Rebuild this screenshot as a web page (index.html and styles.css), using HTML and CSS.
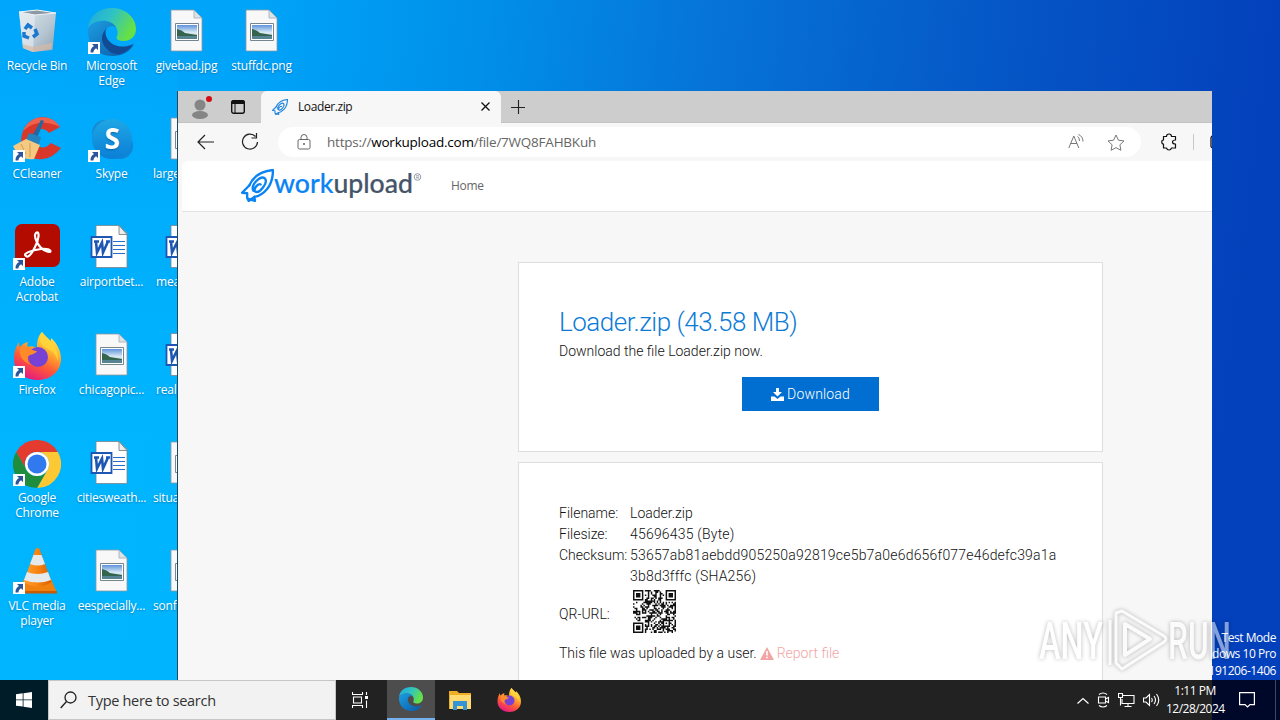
FILE: index.html
```html
<!DOCTYPE html>
<html lang="en">
<head>
    <meta charset="UTF-8">
    <meta name="viewport" content="width=device-width, initial-scale=1.0">
    <title>Loader.zip</title>
    <link rel="stylesheet" href="styles.css">
</head>
<body>

<!-- Shared icons -->
<svg class="defs" width="0" height="0">
    <defs>
        <linearGradient id="edgeBlue" x1="0" y1="0" x2="1" y2="1"><stop offset="0" stop-color="#1b9de2"/><stop offset="1" stop-color="#0c59a4"/></linearGradient>
        <linearGradient id="edgeGreen" x1="0" y1="0" x2="1" y2="0.4"><stop offset="0" stop-color="#1ca8e0"/><stop offset="0.5" stop-color="#2fc2c5"/><stop offset="1" stop-color="#66e047"/></linearGradient>
        <linearGradient id="binSide" x1="0" y1="0" x2="1" y2="1"><stop offset="0" stop-color="#dfe8ee"/><stop offset="0.6" stop-color="#b6c6d2"/><stop offset="1" stop-color="#8fa3b3"/></linearGradient>
        <linearGradient id="fox" x1="0.8" y1="0" x2="0.3" y2="1"><stop offset="0" stop-color="#fff44f"/><stop offset="0.35" stop-color="#ffb02e"/><stop offset="0.65" stop-color="#ff5a36"/><stop offset="1" stop-color="#e31587"/></linearGradient>
        <linearGradient id="skype" x1="0" y1="0" x2="0" y2="1"><stop offset="0" stop-color="#1fa7e6"/><stop offset="1" stop-color="#0a7fd6"/></linearGradient>
        <linearGradient id="photo" x1="0" y1="0" x2="0" y2="1"><stop offset="0" stop-color="#5e93dc"/><stop offset="0.55" stop-color="#dcecf5"/><stop offset="1" stop-color="#8fb6cf"/></linearGradient>
        <linearGradient id="cone" x1="0" y1="0" x2="1" y2="0"><stop offset="0" stop-color="#ffa030"/><stop offset="0.5" stop-color="#f98410"/><stop offset="1" stop-color="#d95e00"/></linearGradient>
    </defs>

    <symbol id="shortcut" viewBox="0 0 12 12">
        <path d="M0 0h12v12H0z" fill="#fff"/>
        <path d="M4 2h6v6L8 6.300Q5.500 7.500 5.300 10.500H2.600Q2 6.500 6 4z" fill="#2b579a"/>
    </symbol>

    <symbol id="bin" viewBox="0 0 48 48">
        <path d="M6 4 24 2l19 3-3.500 37L20 44l-10-4z" fill="url(#binSide)"/>
        <path d="M6 4 22 7 43 5 24 2z" fill="#8b9aa5" stroke="#eef4f8"/>
        <path d="M22 7 20 44 10 40 6 4z" fill="#e9eff3" opacity=".6"/>
        <path d="m10 36 10 3 19-4-.500 6L20 44l-10-4z" fill="#d9b9a4" opacity=".7"/>
        <path d="m12 21 3-4 4 3M22 21l2 5-4 3M16 30l-5-2v-4" fill="none" stroke="#1a78cf" stroke-width="3.500"/>
    </symbol>

    <symbol id="edge" viewBox="0 0 48 48">
        <path d="M0 21C1 8 11 0 24 0c14 0 24 10 24 21 0 8-6 12-12 12-5 0-9-2-7-5 2-4 0-13-11-15C9 12 2 16 0 21z" fill="url(#edgeGreen)"/>
        <path d="M0 21c2-5 9-9 18-8 5 1 8 3 10 6-7-3-12 2-10 9 2 9 15 15 28 8C42 44 34 48 24 48 9 48-1 36 0 21z" fill="url(#edgeBlue)"/>
        <path d="M19 20c-6 5-7 14-1 20 4 5 10 7 14 6 6-2 10-5 13-10-12 6-24 1-27-8-1-4-1-6 1-8z" fill="#124a93"/>
    </symbol>

    <symbol id="edgeSmall" viewBox="0 0 48 48">
        <path d="M0 21C1 8 11 0 24 0c14 0 24 10 24 21 0 8-6 12-12 12-5 0-9-2-7-5 2-4 0-13-11-15C9 12 2 16 0 21z" fill="url(#edgeGreen)"/>
        <path d="M0 21c2-5 9-9 18-8 5 1 8 3 10 6-7-3-12 2-10 9 2 9 15 15 28 8C42 44 34 48 24 48 9 48-1 36 0 21z" fill="url(#edgeBlue)"/>
    </symbol>

    <symbol id="picture" viewBox="0 0 48 48">
        <path d="M8 2h23l8 8v33H8z" fill="#f8f8f8" stroke="#8e989e" stroke-width=".8"/>
        <path d="M31 2v8h8z" fill="#d9e4ea" stroke="#9ba5aa" stroke-width=".7"/>
        <path d="M12.500 15.500h23v17h-23z" fill="#fff" stroke="#778591"/>
        <path d="M14 17h20v14H14z" fill="url(#photo)"/>
        <path d="M14 21q5 1 8 4l12 2v1H14z" fill="#34634e"/>
        <path d="M14 28h20v3H14z" fill="#568493"/>
    </symbol>

    <symbol id="word" viewBox="0 0 48 48">
        <path d="M8 1.500h23l8 8v34H8z" fill="#fff" stroke="#7a858c" stroke-width=".8"/>
        <path d="M31 1.500v9h8z" fill="#eee" stroke="#6d767c" stroke-width=".8"/>
        <path d="M25 17.500h12M25 21.500h12M25 25.500h12M25 29.500h12" stroke="#2b6cc4"/>
        <path d="M3.500 13h20v20h-20z" fill="#fff" stroke="#1e56b4" stroke-width="1.800"/>
        <path d="M6 17.500h5M8 17.500l1 11 5-10 1 10 5-11M18 17.500h4" fill="none" stroke="#1e56b4" stroke-width="2.600"/>
    </symbol>

    <symbol id="ccleaner" viewBox="0 0 48 48">
        <path d="M47 11C38-3 17-2 10 15 3 34 17 45 30 43q10-1 18-11l-10-5q-9 9-15 0c-6-11 6-19 13-10z" fill="#d8372a"/>
        <path d="M47 11C38-3 17-2 10 15q15-14 37-4z" fill="#f0614d"/>
        <path d="m28 4 3 1-7 17-5-2z" fill="#27679f"/>
        <path d="m16 17 12 4-2 8-13-5z" fill="#2583bd"/>
        <path d="M13 23 0 30q7 15 21 13l6-14z" fill="#f4ca83"/>
        <path d="m8 28 5 10M17 27v14" stroke="#d69a4a"/>
    </symbol>

    <symbol id="skypeIcon" viewBox="0 0 48 48">
        <circle cx="17" cy="17" r="13" fill="#168ad0"/>
        <circle cx="32" cy="30" r="13" fill="#1085d7"/>
        <circle cx="24" cy="23" r="20" fill="url(#skype)"/>
        <text x="24" y="33" text-anchor="middle" class="skype-letter">S</text>
    </symbol>

    <symbol id="acrobat" viewBox="0 0 48 48">
        <rect x="2" y="0" width="45" height="43" rx="7" fill="#b30b00"/>
        <path d="M13 32C9 30 18 26 28 25c11-1 12 5 5 2C25 24 20 12 23 9c4-3 3 7-1 14-4 8-7 11-9 9z" fill="none" stroke="#fff" stroke-width="2.200"/>
    </symbol>

    <symbol id="firefox" viewBox="0 0 48 48">
        <path d="M29 0c2 3 4 5 9 9V6c7 6 10 14 10 21 0 12-10 21-23 21C11 48 1 39 1 27 1 19 3 15 6 10c0 3 0 4 1 5q3-4 8-5c-1 2-1 4 0 5 2-1 5-1 9 1 0-7 1-12 5-16z" fill="url(#fox)"/>
        <circle cx="25" cy="25" r="10" fill="#7542d5"/>
        <path d="M7 16c5-4 10 3 17 3-2 4-8 3-9 6-1 4 1 7 5 8-8-1-15-8-13-17z" fill="#ff8a2a"/>
        <path d="M29 0c8 9 17 15 16 29-3-11-9-10-16-16-3-4-2-10 0-13z" fill="#ffd43c" opacity=".9"/>
    </symbol>

    <symbol id="chrome" viewBox="0 0 48 48">
        <path d="M3.200 12a24 24 0 0 1 41.600 0H24a12 12 0 0 0-10.400 18z" fill="#e33b2e"/>
        <path d="M44.800 12A24 24 0 0 1 24 48l10.400-18A12 12 0 0 0 24 12z" fill="#fcc934"/>
        <path d="M24 48A24 24 0 0 1 3.200 12l10.400 18A12 12 0 0 0 34.400 30z" fill="#1e8e3e"/>
        <circle cx="24" cy="24" r="12" fill="#fff"/>
        <circle cx="24" cy="24" r="9.500" fill="#3079ee"/>
    </symbol>

    <symbol id="vlc" viewBox="0 0 48 48">
        <path d="M11 31h27l6 14H5z" fill="#f0810f"/>
        <path d="M5 43h39v2.500H5z" fill="#ca5b00"/>
        <path d="M22.500 1q2-2 4 0l12 33q-14 9-28 0z" fill="url(#cone)"/>
        <path d="M20.500 7h8l3.500 9q-7 3-15 0zM14 24q10 4 21 0l3 8q-13 5-27 0z" fill="#e5e9eb"/>
    </symbol>

    <symbol id="rocket" viewBox="0 0 32 32">
        <g fill="none" stroke="currentColor" stroke-width="2.300" stroke-linejoin="round" stroke-linecap="round">
            <path d="M8 16C12 7 20 2 31 1c0 11-4 20-14 25l-4 1 .500 4-6-2"/>
            <path d="M8 16 1 23l5 .500V28l1.500 3L13 27"/>
            <path d="M12 21c-3-6 7-15 11-12 4 4-5 15-9 13-3-2 3-9 5-7"/>
        </g>
    </symbol>
</svg>

<div class="screen">

    <!-- Desktop icons, one list per column -->
    <div class="desktop">
        <div class="column">
            <div class="shortcut"><svg class="icon"><use href="#bin"/></svg><span>Recycle Bin</span></div>
            <div class="shortcut"><svg class="icon"><use href="#ccleaner"/></svg><svg class="arrow"><use href="#shortcut"/></svg><span>CCleaner</span></div>
            <div class="shortcut"><svg class="icon"><use href="#acrobat"/></svg><svg class="arrow"><use href="#shortcut"/></svg><span>Adobe Acrobat</span></div>
            <div class="shortcut"><svg class="icon"><use href="#firefox"/></svg><svg class="arrow"><use href="#shortcut"/></svg><span>Firefox</span></div>
            <div class="shortcut"><svg class="icon"><use href="#chrome"/></svg><svg class="arrow"><use href="#shortcut"/></svg><span>Google Chrome</span></div>
            <div class="shortcut"><svg class="icon"><use href="#vlc"/></svg><svg class="arrow"><use href="#shortcut"/></svg><span>VLC media player</span></div>
        </div>
        <div class="column">
            <div class="shortcut"><svg class="icon"><use href="#edge"/></svg><svg class="arrow"><use href="#shortcut"/></svg><span>Microsoft Edge</span></div>
            <div class="shortcut"><svg class="icon"><use href="#skypeIcon"/></svg><svg class="arrow"><use href="#shortcut"/></svg><span>Skype</span></div>
            <div class="shortcut"><svg class="icon"><use href="#word"/></svg><span>airportbet...</span></div>
            <div class="shortcut"><svg class="icon"><use href="#picture"/></svg><span>chicagopic...</span></div>
            <div class="shortcut"><svg class="icon"><use href="#word"/></svg><span>citiesweath...</span></div>
            <div class="shortcut"><svg class="icon"><use href="#picture"/></svg><span>eespecially...</span></div>
        </div>
        <div class="column">
            <div class="shortcut"><svg class="icon"><use href="#picture"/></svg><span>givebad.jpg</span></div>
            <div class="shortcut"><svg class="icon"><use href="#picture"/></svg><span class="cut">large</span></div>
            <div class="shortcut"><svg class="icon"><use href="#word"/></svg><span class="cut short">mea</span></div>
            <div class="shortcut"><svg class="icon"><use href="#word"/></svg><span class="cut short">realp</span></div>
            <div class="shortcut"><svg class="icon"><use href="#picture"/></svg><span class="cut">situa</span></div>
            <div class="shortcut"><svg class="icon"><use href="#picture"/></svg><span class="cut">sonfl</span></div>
        </div>
        <div class="column">
            <div class="shortcut"><svg class="icon"><use href="#picture"/></svg><span>stuffdc.png</span></div>
        </div>
    </div>

    <div class="build">
        <div>Test Mode</div>
        <div>dows 10 Pro</div>
        <div>191206-1406</div>
    </div>

    <!-- Browser window -->
    <div class="window">
        <div class="tabs">
            <div class="tab-tools">
                <svg width="24" height="26" viewBox="0 0 24 26"><circle cx="11" cy="11" r="5.500" fill="#858585"/><ellipse cx="11" cy="21" rx="8" ry="4" fill="#858585"/><circle cx="20" cy="5" r="3" fill="#d40c14"/></svg>
                <svg width="16" height="16" viewBox="0 0 16 16"><rect x="1.700" y="1.700" width="12.600" height="12.600" rx="2" fill="none" stroke="#111" stroke-width="1.400"/><path d="M1 4q0-3 3-3h8q3 0 3 3v1H1z" fill="#111"/><path d="M5 5v9" stroke="#111"/></svg>
            </div>
            <div class="tab">
                <svg class="favicon"><use href="#rocket"/></svg>
                <span>Loader.zip</span>
                <svg class="close" width="9" height="9" viewBox="0 0 9 9"><path d="m.5.5 8 8m0-8-8 8" stroke="#111" stroke-width="1.300"/></svg>
            </div>
            <svg class="new-tab" width="14" height="14" viewBox="0 0 14 14"><path d="M0 7.500h14M7.500 0v14" stroke="#222" stroke-width="1.100"/></svg>
        </div>

        <div class="toolbar">
            <svg width="18" height="16" viewBox="0 0 18 16"><path d="M17 8H1.500M8 1 1 8l7 7" fill="none" stroke="#222" stroke-width="1.200"/></svg>
            <svg class="reload" width="18" height="18" viewBox="0 0 18 18"><path d="M14.500 3.500A7.500 7.500 0 1 0 16.500 9M15.500 0v5h-5" fill="none" stroke="#222" stroke-width="1.200"/></svg>
            <div class="address">
                <svg width="14" height="16" viewBox="0 0 14 16"><rect x="1" y="5.500" width="12" height="9.500" rx="1.500" fill="none" stroke="#666"/><path d="M4 5V3.500q0-3 3-3t3 3V5" fill="none" stroke="#666"/><circle cx="7" cy="10" r="1" fill="#666"/></svg>
                <span class="url">https://<b>workupload.com</b>/file/7WQ8FAHBKuh</span>
                <svg width="16" height="16" viewBox="0 0 16 16"><path d="m.8 14 5-12 5 12M2.500 9.500h6.500M9.500 2.500q2 1 2 4.500M10.500.500q4.500 2 4.500 7" fill="none" stroke="#777"/></svg>
                <svg class="star" width="18" height="17" viewBox="0 0 18 17"><path d="m9 1 2.400 5.200 5.600.7-4.100 3.900 1 5.500L9 13.600l-4.900 2.700 1-5.500L1 6.900l5.600-.7z" fill="none" stroke="#777"/></svg>
            </div>
            <svg class="puzzle" width="16" height="18" viewBox="0 0 16 18"><path d="M2.500 3.500h3Q5.500 1 8 1t2.500 2.500h4v3.500q-3 0-3 2t3 2v4h-4Q10 17 8 17t-2.500-2h-3v-4Q.8 11 .8 9t1.700-2z" fill="none" stroke="#111" stroke-width="1.200" stroke-linejoin="round"/></svg>
            <div class="divider"></div>
            <svg class="split" width="16" height="14" viewBox="0 0 16 14"><rect x="1" y="1" width="14" height="12" rx="2" fill="none" stroke="#111" stroke-width="1.300"/></svg>
        </div>

        <div class="page">
            <div class="header">
                <svg class="logo" width="184" height="36" viewBox="0 0 184 36">
                    <use href="#rocket" class="logo-rocket" x="0" y="1" width="33" height="33"/>
                    <text x="33" y="25" textLength="139" lengthAdjust="spacingAndGlyphs" class="logo-text"><tspan class="logo-work">work</tspan>upload</text>
                    <circle cx="176.500" cy="9" r="3.300" fill="none" stroke="#77828c" stroke-width=".8"/>
                    <text x="176.500" y="11" text-anchor="middle" class="logo-mark">R</text>
                </svg>
                <a class="nav">Home</a>
            </div>

            <div class="card first">
                <h1>Loader.zip (43.58 MB)</h1>
                <p>Download the file Loader.zip now.</p>
                <div class="button">
                    <svg width="13" height="13" viewBox="0 0 13 13"><path d="M5 0h3v4h3L6.500 8.500 2 4h3zM0 8.500h3.500l3 2.500 3-2.500H13V13H0z" fill="#fff"/></svg>
                    <span>Download</span>
                </div>
            </div>

            <div class="card second">
                <div class="details">
                    <span>Filename:</span><span>Loader.zip</span>
                    <span>Filesize:</span><span class="hash">45696435 (Byte)</span>
                    <span>Checksum:</span><span class="hash">53657ab81aebdd905250a92819ce5b7a0e6d656f077e46defc39a1a<br>3b8d3fffc (SHA256)</span>
                    <span class="qr-label">QR-URL:</span><svg class="qr" viewBox="0 0 29 29"><path id="qrPath"/></svg>
                </div>
                <div class="report">
                    <span>This file was uploaded by a user.</span>
                    <a><svg width="14" height="13" viewBox="0 0 14 13"><path d="M7 0 14 13H0z" fill="#f2a5a5"/><path d="M7 4v4.500M7 9.800v1.500" stroke="#fff" stroke-width="1.600"/></svg><span>Report file</span></a>
                </div>
            </div>
        </div>
    </div>

    <!-- Taskbar -->
    <div class="taskbar">
        <div class="start"><svg width="16" height="16" viewBox="0 0 16 16"><path d="M0 2.200 6.700 1.300V7.500H0zM7.500 1.200 16 0v7.500H7.500zM0 8.300h6.700v6.300L0 13.700zM7.500 8.300H16V16l-8.500-1.200z" fill="#fff"/></svg></div>
        <div class="search">
            <svg width="17" height="18" viewBox="0 0 17 18"><circle cx="10.500" cy="6.500" r="5.500" fill="none" stroke="#222" stroke-width="1.300"/><path d="M6.500 10.500.700 17" stroke="#222" stroke-width="1.400"/></svg>
            <span>Type here to search</span>
        </div>
        <div class="task first-task"><svg width="17" height="16" viewBox="0 0 17 16"><path d="M.5 0v2.500h10V0M.5 16v-2.500h10V16M1.500 5h8v6h-8zM14.500 0v3M14.500 8.500V16" fill="none" stroke="#fff" stroke-width="1.100"/><path d="M13 4h3v3h-3z" fill="#fff"/></svg></div>
        <div class="task active"><svg class="app"><use href="#edgeSmall"/></svg></div>
        <div class="task"><svg width="22" height="19" viewBox="0 0 22 19"><path d="M0 0h8l2 2h12v16H0z" fill="#edae25"/><path d="M1 4h21v14H1z" fill="#ffda70"/><path d="M4 10h14v9h-4v-4H8v4H4z" fill="#3794d2"/></svg></div>
        <div class="task"><svg class="app"><use href="#firefox"/></svg></div>
        <div class="tray">
            <svg width="12" height="7" viewBox="0 0 12 7"><path d="m.5 6.500 5.500-5 5.500 5" fill="none" stroke="#fff" stroke-width="1.200"/></svg>
            <svg width="13" height="16" viewBox="0 0 13 16"><path d="M2 2.500q4-3 8 0M2 13.500q4 3 8 0M1.500 5h7v6h-7zM8.500 7 11.500 5.500v5L8.500 9" fill="none" stroke="#fff" stroke-width="1.100"/></svg>
            <svg width="17" height="15" viewBox="0 0 17 15"><path d="M5 2.500h11v8H4V6M.5.5h4v4h-4zM2.500 4.500v8M10 10.500v3M6.500 13.500h7" fill="none" stroke="#fff" stroke-width="1.100"/></svg>
            <svg width="17" height="14" viewBox="0 0 17 14"><path d="M.5 5v4H3l3.500 3.500v-11L3 5zM8.500 5q1.500 2 0 4M11 3q3 4 0 8M13.500 1q4.500 6 0 12" fill="none" stroke="#fff" stroke-width="1.100"/></svg>
        </div>
        <div class="clock"><div>1:11 PM</div><div>12/28/2024</div></div>
        <svg class="notice" width="16" height="16" viewBox="0 0 16 16"><path d="M.6.600h14.800v12H11L8.500 15 6 12.600H.6z" fill="none" stroke="#fff" stroke-width="1.200"/></svg>
        <div class="peek"></div>
    </div>

    <!-- Watermark over everything -->
    <svg class="watermark" width="200" height="68" viewBox="0 0 200 68">
        <text x="3" y="54" textLength="64" lengthAdjust="spacingAndGlyphs">ANY</text>
        <g fill="none" stroke="#fff" stroke-linejoin="round">
            <path d="M80 8v50l6 6 42-27q4-3 0-6L86 6z" stroke-width="3"/>
            <path d="M89 19v31l25-16z" stroke-width="4"/>
            <path d="M74 15v45" stroke-width="3"/>
        </g>
        <text x="132" y="54" textLength="63" lengthAdjust="spacingAndGlyphs">RUN</text>
    </svg>
</div>

<script>
// Draw the QR code modules into one path
const size = 29;
let seed = 7;

function nextBit() {
    seed = (seed * 1103515245 + 12345) % 2147483648;
    return (seed >> 16) & 1;
}

// Square ring with a filled centre, -1 when the cell is outside of it
function marker(x, y, cx, cy, radius) {
    const d = Math.max(Math.abs(x - cx), Math.abs(y - cy));
    if (d > radius) return -1;
    return d === radius - 1 ? 0 : 1;
}

let path = '';
for (let y = 0; y < size; y++) {
    for (let x = 0; x < size; x++) {
        let on = nextBit();
        for (const [cx, cy] of [[3, 3], [25, 3], [3, 25]]) {
            const d = Math.max(Math.abs(x - cx), Math.abs(y - cy));
            if (d <= 4) on = d === 4 || d === 2 ? 0 : 1;
        }
        const inner = marker(x, y, 22, 22, 2);
        if (inner !== -1) on = inner;
        if (on) path += 'M' + x + ' ' + y + 'h1v1h-1z';
    }
}
document.getElementById('qrPath').setAttribute('d', path);
</script>

</body>
</html>
```
FILE: styles.css
```css
/* Global Styles */
* {
    box-sizing: border-box;
}

body {
    margin: 0;
    font-family: 'Open Sans', 'Noto Sans', sans-serif;
    font-size: 12px;
    overflow: hidden;
}

svg {
    display: block;
    flex-shrink: 0;
}

.defs {
    position: absolute;
}

.screen {
    position: relative;
    width: 1280px;
    height: 720px;
    overflow: hidden;
    background:
        linear-gradient(180deg, rgba(0, 185, 255, 0) 0, rgba(0, 185, 255, 0.8) 60%) 0 0 / 178px 720px no-repeat,
        linear-gradient(97deg, #00a6fb 0%, #00a5fa 18%, #0090ea 35%, #0674d8 52%, #0556c6 74%, #0340bb 94%);
}

/* Desktop */
.desktop {
    display: flex;
    height: 680px;
}

.column {
    width: 75px;
}

.column:first-child {
    width: 74px;
}

.shortcut {
    position: relative;
    display: flex;
    flex-direction: column;
    align-items: center;
    height: 108px;
    padding: 8px 0 0;
    color: #fff;
    line-height: 15px;
    text-align: center;
    letter-spacing: -0.2px;
    text-shadow: 0 1px 2px rgba(0, 40, 90, 0.4);
}

.shortcut span {
    width: 75px;
    margin-top: 2px;
}

.column:first-child span {
    width: 70px;
}

.shortcut .cut {
    padding-left: 4px;
    text-align: left;
}

.shortcut .short {
    padding-left: 7px;
}

.icon {
    width: 48px;
    height: 48px;
}

.arrow {
    position: absolute;
    left: 13px;
    top: 42px;
    width: 12px;
    height: 12px;
}

.column:nth-child(2) .arrow {
    left: 14px;
}

.skype-letter {
    font: bold 28px 'Open Sans', sans-serif;
    fill: #fff;
}

.build {
    position: absolute;
    right: 4px;
    bottom: 41px;
    color: #fff;
    line-height: 16.500px;
    text-align: right;
    letter-spacing: -0.45px;
}

/* Browser window */
.window {
    position: absolute;
    left: 177px;
    top: 91px;
    width: 1035px;
    height: 589px;
    border-left: 1px solid #1c4966;
    background: #f7f7f7;
    overflow: hidden;
}

.tabs {
    display: flex;
    align-items: center;
    height: 32px;
    background: #cdcdcd;
    border-bottom: 1px solid #c3c3c3;
}

.tab-tools {
    display: flex;
    align-items: center;
    gap: 17px;
    width: 83px;
    padding-left: 11px;
}

.tab {
    display: flex;
    align-items: center;
    width: 240px;
    height: 32px;
    padding: 0 11px;
    background: #f7f7f7;
    border-radius: 6px 6px 0 0;
    color: #111;
    letter-spacing: -0.4px;
}

.favicon {
    width: 16px;
    height: 16px;
    margin-right: 10px;
    color: #2486df;
}

.close {
    margin-left: auto;
}

.new-tab {
    margin-left: 10px;
}

.toolbar {
    display: flex;
    align-items: center;
    width: 1060px;
    height: 38px;
    padding-left: 19px;
}

.reload {
    margin-left: 26px;
}

.address {
    display: flex;
    align-items: center;
    width: 863px;
    height: 30px;
    margin-left: 19px;
    padding: 0 16px 0 19px;
    background: #fff;
    border-radius: 15px;
}

.url {
    margin-left: 16px;
    margin-right: auto;
    color: #666;
    font-size: 13.500px;
    letter-spacing: -0.23px;
}

.url b {
    color: #000;
    font-weight: 400;
}

.star {
    margin-left: 23px;
}

.puzzle {
    margin-left: 20px;
}

.divider {
    width: 1px;
    height: 16px;
    margin: 0 16px;
    background: #c8c8c8;
}

/* Page */
.page {
    height: 520px;
    margin-left: 4px;
    background: #f7f7f7;
    border-top-left-radius: 6px;
    font-family: Roboto, sans-serif;
    font-size: 14px;
    font-weight: 300;
    color: #111;
    overflow: hidden;
}

.header {
    display: flex;
    align-items: center;
    height: 51px;
    padding-left: 59px;
    background: #fff;
    border-bottom: 1px solid #e2e2e2;
}

.logo-rocket {
    color: #0b84f3;
}

.logo-text {
    font: 500 26px Lato, sans-serif;
    fill: #455569;
    stroke: #455569;
    stroke-width: 0.2px;
}

.logo-work {
    fill: #0b84f3;
    stroke: #0b84f3;
}

.logo-mark {
    font: 5px Roboto, sans-serif;
    fill: #77828c;
}

.nav {
    margin-left: 26px;
    padding-bottom: 2px;
    color: #666;
    font-family: 'Open Sans', sans-serif;
    font-size: 12px;
    font-weight: 400;
    letter-spacing: -0.3px;
}

.card {
    width: 585px;
    margin-left: 336px;
    padding: 40px;
    background: #fff;
    border: 1px solid #dedede;
}

.first {
    height: 190px;
    margin-top: 50px;
}

.second {
    height: 260px;
    margin-top: 10px;
}

h1 {
    margin: 0;
    color: #0b7bd6;
    font-size: 26px;
    font-weight: 300;
    line-height: 38px;
    letter-spacing: -0.48px;
}

p {
    margin: 0;
    line-height: 21px;
}

.button {
    display: flex;
    align-items: center;
    justify-content: center;
    gap: 3px;
    width: 137px;
    height: 34px;
    margin: 15px auto 0;
    background: #006fd1;
    color: #fff;
    letter-spacing: 0.15px;
}

.details {
    display: grid;
    grid-template-columns: 71px auto;
    line-height: 21px;
}

.hash {
    letter-spacing: 0.2px;
}

.qr-label {
    align-self: center;
    padding-bottom: 2px;
}

.qr {
    width: 43px;
    height: 43px;
    margin: 3px 0 10px 3px;
    fill: #111;
}

.report {
    display: flex;
    gap: 3px;
    line-height: 21px;
}

.report a {
    display: flex;
    align-items: center;
    gap: 3px;
    color: #f2a5a5;
}

/* Taskbar */
.taskbar {
    display: flex;
    position: absolute;
    left: 0;
    bottom: 0;
    width: 1280px;
    height: 40px;
    background: linear-gradient(90deg, #001c28 0, #001c28 178px, #222 178px, #222 1212px, #00082a 1212px);
    color: #fff;
}

.start,
.task {
    display: flex;
    align-items: center;
    justify-content: center;
    width: 48px;
}

.task {
    width: 49px;
}

.first-task {
    width: 51px;
    padding-right: 2px;
}

.active {
    width: 48px;
    background: #4d4d4d;
    border-bottom: 2px solid #76b0ed;
}

.app {
    width: 24px;
    height: 24px;
}

.search {
    display: flex;
    align-items: center;
    gap: 11px;
    width: 288px;
    padding-left: 11px;
    background: #f2f2f2;
    border: 1px solid #c6c6c6;
    color: #333;
    font-size: 14.500px;
    letter-spacing: -0.3px;
}

.tray {
    display: flex;
    align-items: center;
    gap: 8px;
    margin-left: auto;
}

.clock {
    width: 58px;
    margin-left: 6px;
    padding-top: 2px;
    line-height: 18px;
    text-align: center;
    letter-spacing: -0.5px;
}

.notice {
    align-self: center;
    margin: 0 20px 0 15px;
}

.peek {
    width: 1px;
    margin-right: 4px;
    background: #3d4a66;
}

/* Watermark */
.watermark {
    position: absolute;
    left: 1036px;
    top: 605px;
    opacity: 0.5;
    filter: drop-shadow(0 0 2px rgba(0, 0, 0, 0.55));
}

.watermark text {
    font: 500 51px Roboto, sans-serif;
    fill: #fff;
}
```
